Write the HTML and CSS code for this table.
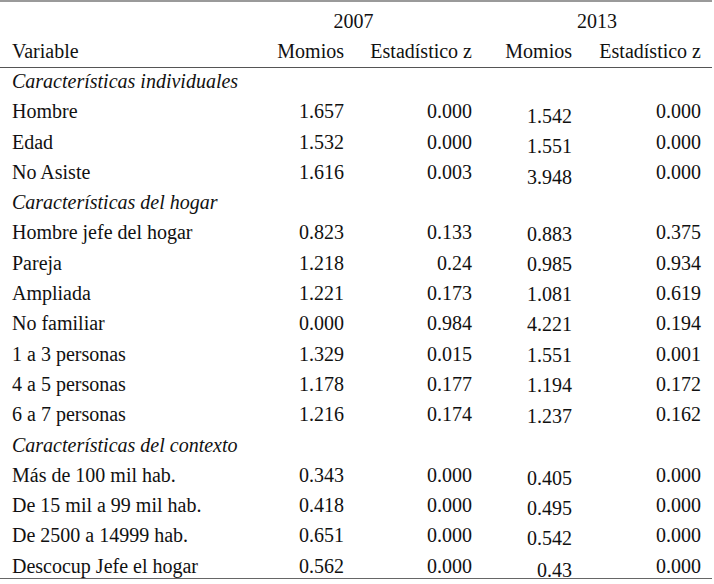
FILE: index.html
```html
<!DOCTYPE html>
<html lang="es">
<head>
<meta charset="utf-8">
<title>Tabla</title>
<link rel="stylesheet" href="styles.css">
</head>
<body>
<table class="tbl">
  <colgroup>
    <col class="c0"><col class="c1"><col class="c2"><col class="c3"><col class="c4">
  </colgroup>
  <thead>
    <tr class="h1">
      <th></th>
      <th colspan="2" class="yr y07">2007</th>
      <th colspan="2" class="yr y13">2013</th>
    </tr>
    <tr class="h2">
      <th class="var">Variable</th>
      <th class="num">Momios</th>
      <th class="num">Estadístico z</th>
      <th class="num">Momios</th>
      <th class="num last">Estadístico z</th>
    </tr>
  </thead>
  <tbody>
    <tr><td colspan="5" class="sec">Características individuales</td></tr>
    <tr><td class="var">Hombre</td><td class="num">1.657</td><td class="num">0.000</td><td class="num"><span class="dn5">1.542</span></td><td class="num last">0.000</td></tr>
    <tr><td class="var">Edad</td><td class="num">1.532</td><td class="num">0.000</td><td class="num"><span class="dn4">1.551</span></td><td class="num last">0.000</td></tr>
    <tr><td class="var">No Asiste</td><td class="num">1.616</td><td class="num">0.003</td><td class="num"><span class="dn5">3.948</span></td><td class="num last">0.000</td></tr>
    <tr><td colspan="5" class="sec">Características del hogar</td></tr>
    <tr><td class="var">Hombre jefe del hogar</td><td class="num">0.823</td><td class="num">0.133</td><td class="num"><span class="dn2">0.883</span></td><td class="num last">0.375</td></tr>
    <tr><td class="var">Pareja</td><td class="num">1.218</td><td class="num">0.24</td><td class="num"><span class="dn1">0.985</span></td><td class="num last">0.934</td></tr>
    <tr><td class="var">Ampliada</td><td class="num">1.221</td><td class="num">0.173</td><td class="num"><span class="dn1">1.081</span></td><td class="num last">0.619</td></tr>
    <tr><td class="var">No familiar</td><td class="num">0.000</td><td class="num">0.984</td><td class="num"><span class="dn1">4.221</span></td><td class="num last">0.194</td></tr>
    <tr><td class="var">1 a 3 personas</td><td class="num">1.329</td><td class="num">0.015</td><td class="num"><span class="dn1">1.551</span></td><td class="num last">0.001</td></tr>
    <tr><td class="var">4 a 5 personas</td><td class="num">1.178</td><td class="num">0.177</td><td class="num"><span class="dn1">1.194</span></td><td class="num last">0.172</td></tr>
    <tr><td class="var">6 a 7 personas</td><td class="num">1.216</td><td class="num">0.174</td><td class="num"><span class="dn2">1.237</span></td><td class="num last">0.162</td></tr>
    <tr><td colspan="5" class="sec">Características del contexto</td></tr>
    <tr><td class="var">Más de 100 mil hab.</td><td class="num">0.343</td><td class="num">0.000</td><td class="num"><span class="dn3">0.405</span></td><td class="num last">0.000</td></tr>
    <tr><td class="var">De 15 mil a 99 mil hab.</td><td class="num">0.418</td><td class="num">0.000</td><td class="num"><span class="dn3">0.495</span></td><td class="num last">0.000</td></tr>
    <tr><td class="var">De 2500 a 14999 hab.</td><td class="num">0.651</td><td class="num">0.000</td><td class="num"><span class="dn3">0.542</span></td><td class="num last">0.000</td></tr>
    <tr class="end"><td class="var">Descocup Jefe el hogar</td><td class="num">0.562</td><td class="num">0.000</td><td class="num"><span class="dn4">0.43</span></td><td class="num last">0.000</td></tr>
  </tbody>
</table>
</body>
</html>
```
FILE: styles.css
```css
html, body {
  margin: 0;
  padding: 0;
  background: #ffffff;
}

body {
  font-family: "Liberation Serif", "Times New Roman", serif;
  font-size: 20px;
  color: #111111;
}

.tbl {
  width: 712px;
  border-collapse: separate;
  border-spacing: 0;
  table-layout: fixed;
  border-top: 2px solid #9a9a9a;
}

.c0 { width: 235px; }
.c1 { width: 109px; }
.c2 { width: 128px; }
.c3 { width: 100px; }
.c4 { width: 140px; }

th, td {
  padding: 0;
  font-weight: normal;
  vertical-align: top;
  line-height: 24px;
  white-space: nowrap;
}

.h1 th {
  padding-top: 6px;
  line-height: 26px;
}

.yr { text-align: center; }
.h1 th.y13 { padding-left: 10px; }

.h2 th {
  padding-top: 3.5px;
  padding-bottom: 3.5px;
  line-height: 26px;
  border-bottom: 1px solid #555555;
}

tbody td {
  padding-top: 1px;
  padding-bottom: 5.3px;
}

.tbl .var {
  text-align: left;
  padding-left: 12px;
}

.num { text-align: right; }
.tbl .num.last { padding-right: 11px; }

.tbl .sec {
  font-style: italic;
  padding-left: 12px;
}

.tbl tbody tr.end td {
  padding-bottom: 0;
  border-bottom: 1px solid #666666;
}

.dn1, .dn2, .dn3, .dn4, .dn5 { display: inline-block; }
.dn1 { transform: translateY(1px); }
.dn2 { transform: translateY(2px); }
.dn3 { transform: translateY(3px); }
.dn4 { transform: translateY(4px); }
.dn5 { transform: translateY(5px); }
```
